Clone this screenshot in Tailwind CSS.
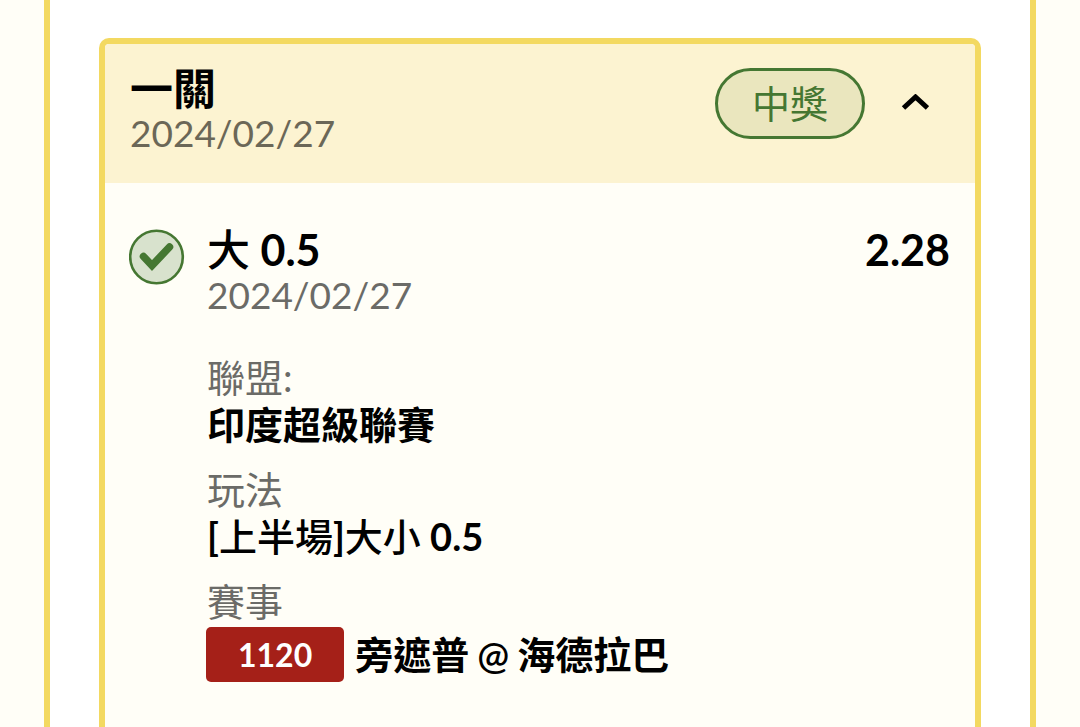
<!DOCTYPE html>
<html lang="zh-Hant">
<head>
<meta charset="utf-8">
<meta name="viewport" content="width=device-width, initial-scale=1">
<title>一關</title>
<script src="https://cdn.jsdelivr.net/npm/@tailwindcss/browser@4"></script>
</head>
<body class="bg-[#fffef7] font-['Lato','Noto_Sans_CJK_TC',sans-serif] text-[38px] leading-[47px] text-black">
<main class="mx-11 flex h-screen flex-col overflow-hidden border-x-6 border-[#f3d961] bg-white px-[49px] pt-[38px]">
  <article class="flex-1 rounded-t-[10px] border-6 border-b-0 border-[#f3d961] bg-[#fffef7]">
    <header class="flex items-start justify-between rounded-t-sm bg-[#fcf3d1] px-[25px] pt-[22px] pb-7">
      <div>
        <h1 class="text-[43px] leading-[45px] font-semibold">一關</h1>
        <p class="text-[37px] leading-[44px] text-[#6b6757]"><time datetime="2024-02-27">2024/02/27</time></p>
      </div>
      <div class="mt-0.5 flex items-center gap-9">
        <span class="flex h-[71px] items-center rounded-full border-3 border-[#457732] bg-[#eae6be] px-[34px] text-[#457732]">中獎</span>
        <button type="button" aria-label="收合" aria-expanded="true" class="mr-[21px] block">
          <svg class="h-5 w-7" viewBox="0 0 28 20" fill="none" stroke="black" stroke-width="5"><path d="M2.500 14 14.500 3 26.500 14"/></svg>
        </button>
      </div>
    </header>
    <section class="flex items-start px-[25px] pt-11">
      <svg class="mt-[2px] mr-[22px] -ml-px h-14 w-14 shrink-0" viewBox="0 0 56 56" fill="none" role="img" aria-label="中獎">
        <circle cx="27.500" cy="28" r="26.300" fill="#d8e2cd" stroke="#457732" stroke-width="2.600"/>
        <path d="M14.500 27.500 23 36.500 40.500 18" stroke="#457732" stroke-width="7.500" stroke-linecap="round"/>
      </svg>
      <div class="flex-1">
        <div class="flex justify-between text-[43px] leading-[46px] font-bold">
          <h2><span class="font-medium">大</span> 0.5</h2>
          <span>2.28</span>
        </div>
        <p class="text-[37px] leading-[44px] text-[#6b6b67]"><time datetime="2024-02-27">2024/02/27</time></p>
        <dl class="mt-[37px] flex flex-col gap-[18px]">
          <div>
            <dt class="text-[#6b6b67]">聯盟:</dt>
            <dd class="font-bold">印度超級聯賽</dd>
          </div>
          <div>
            <dt class="text-[#6b6b67]">玩法</dt>
            <dd class="font-bold">[<span class="font-medium">上半場</span>]<span class="font-medium">大小</span> 0.5</dd>
          </div>
          <div>
            <dt class="text-[#6b6b67]">賽事</dt>
            <dd class="mt-0.5 flex items-center gap-[11px] font-semibold">
              <span class="-ml-px flex h-[55px] items-center rounded-[5px] bg-[#a52018] px-8 text-[32px] font-bold text-white">1120</span>
              <span class="flex gap-2"><span>旁遮普</span><span>@</span><span>海德拉巴</span></span>
            </dd>
          </div>
        </dl>
      </div>
    </section>
  </article>
</main>
</body>
</html>
